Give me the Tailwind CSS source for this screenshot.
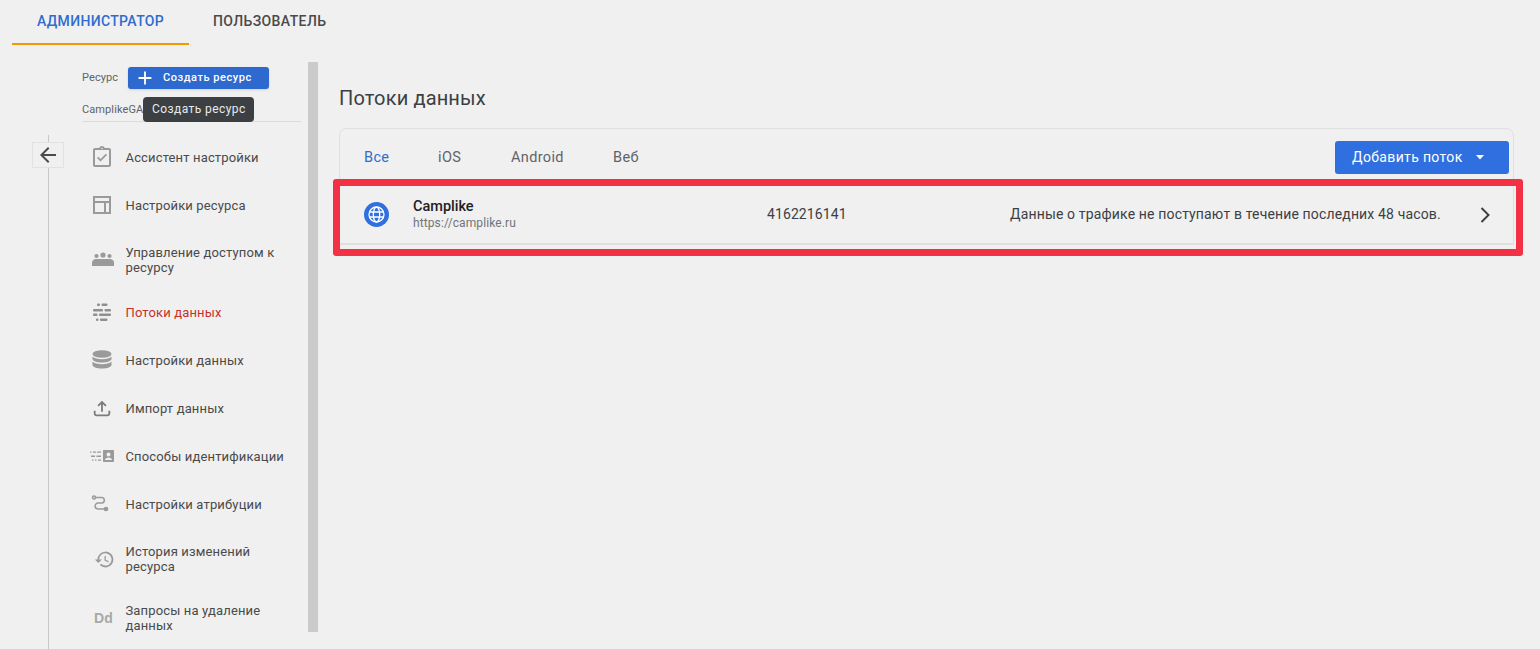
<!DOCTYPE html>
<html lang="ru">
<head>
  <meta charset="UTF-8" />
  <title>Потоки данных</title>
  <script src="https://cdn.jsdelivr.net/npm/@tailwindcss/browser@4"></script>
</head>
<body class="bg-[#f0f0f0] h-[649px] w-[1540px] overflow-hidden font-['Roboto',sans-serif] text-[#3c4043] relative">
  <!-- Top tabs -->
  <div class="flex h-[45px] pl-3">
    <div class="w-[177px] h-[45px] border-b-2 border-[#f29900] pl-[25px] pt-[12px] text-[14px] leading-[18px] tracking-[0.35px] font-medium text-[#2f6ccf]">АДМИНИСТРАТОР</div>
    <div class="pl-6 pt-[12px] text-[14px] leading-[18px] tracking-[0.4px] font-medium text-[#4a4a4a]">ПОЛЬЗОВАТЕЛЬ</div>
  </div>

  <div class="flex">
    <!-- Back column -->
    <div class="w-[82px] h-[604px] shrink-0 relative">
      <div class="absolute left-[48px] top-[90px] bottom-0 w-px bg-[#c8c8c8]"></div>
      <button class="absolute left-[32px] top-[97px] w-[32px] h-[26px] bg-[#f0f0f0] border border-[#e2e2e2] flex items-center justify-center">
        <svg width="24" height="24" viewBox="0 0 24 24" fill="#4a4a4a"><path d="M20 11H7.830l5.590-5.590L12 4l-8 8 8 8 1.410-1.410L7.830 13H20v-2z"/></svg>
      </button>
    </div>

    <!-- Sidebar -->
    <div class="w-[219px] shrink-0 relative">
      <div class="flex items-center pt-[22px] h-[44px] text-[11px] tracking-[0.1px] text-[#5f6368]">
        <span class="w-[46px]">Ресурс</span>
        <button class="w-[141px] h-[22px] rounded-[3px] bg-[#2d69cf] shadow-sm flex items-center text-white text-[11px] font-medium tracking-[0.55px]">
          <svg class="ml-[6px] mr-[7px]" width="22" height="22" viewBox="0 0 24 24" fill="#fff"><path d="M19 13h-6v6h-2v-6H5v-2h6V5h2v6h6v2z"/></svg>
          Создать ресурс
        </button>
      </div>
      <div class="h-[33px] pt-[14px] text-[11px] leading-[13px] tracking-[0.1px] text-[#5f6368] border-b border-[#dcdcdc]">CamplikeGA</div>
      <div class="absolute left-[61px] top-[52px] h-[25px] w-[111px] pl-[9px] rounded-[4px] bg-[#3c4043] text-[#e8eaed] text-[12px] leading-[25px] tracking-[0.42px] whitespace-nowrap">Создать ресурс</div>

      <nav class="text-[13px] leading-[15px] tracking-[0.15px] text-[#4a4a4a] pt-[11px]">
        <div class="flex items-center h-[48px]">
          <div class="w-[40px] mr-[3.500px] flex justify-center">
            <svg width="24" height="24" viewBox="0 0 24 24" fill="#9a9a9a"><path d="M19 3h-4.180C14.400 1.840 13.300 1 12 1s-2.400.84-2.820 2H5c-1.100 0-2 .9-2 2v15c0 1.100.9 2 2 2h14c1.100 0 2-.9 2-2V5c0-1.100-.9-2-2-2zm-7-.2c.41 0 .75.34.75.75s-.34.75-.75.75-.75-.34-.75-.75.34-.75.75-.75zM19 20H5V5h14v15zm-8.500-3.500l-3.500-3.500 1.200-1.200 2.300 2.300 5.300-5.300 1.200 1.200-6.500 6.500z"/></svg>
          </div>
          <span>Ассистент настройки</span>
        </div>
        <div class="flex items-center h-[48px]">
          <div class="w-[40px] mr-[3.500px] flex justify-center">
            <svg width="24" height="24" viewBox="0 0 24 24" fill="#9a9a9a"><path d="M3 3v18h18V3H3zm16 2v3H5V5h14zM5 19V10h9v9H5zm11 0v-9h3v9h-3z"/></svg>
          </div>
          <span>Настройки ресурса</span>
        </div>
        <div class="flex items-center h-[48px] mt-[7px]">
          <div class="w-[40px] mr-[3.500px] flex justify-center pl-[1px]">
            <svg width="24" height="24" viewBox="0 0 24 24" fill="#9a9a9a"><circle cx="12" cy="7" r="2.600"/><circle cx="5.500" cy="8" r="2.100"/><circle cx="18.500" cy="8" r="2.100"/><path d="M1 18v-3.500c0-2 2-3.500 4-3.500h14c2 0 4 1.500 4 3.500V18H1z"/></svg>
          </div>
          <span>Управление доступом к<br>ресурсу</span>
        </div>
        <div class="flex items-center h-[48px] mt-[4px] text-[#c5302c]">
          <div class="w-[40px] mr-[3.500px] flex justify-center">
            <svg width="24" height="24" viewBox="0 0 24 24" fill="#8f8f8f"><rect x="7" y="3.500" width="3" height="2.400" rx="1"/><rect x="11.500" y="3.500" width="6" height="2.400" rx="1"/><rect x="3" y="9" width="10" height="2.400" rx="1"/><rect x="14.500" y="9" width="6.500" height="2.400" rx="1"/><rect x="3" y="13.500" width="4.500" height="2.400" rx="1"/><rect x="9" y="13.500" width="12" height="2.400" rx="1"/><rect x="6" y="18.500" width="2.500" height="2.400" rx="1"/><rect x="10" y="18.500" width="7.500" height="2.400" rx="1"/></svg>
          </div>
          <span>Потоки данных</span>
        </div>
        <div class="flex items-center h-[48px]">
          <div class="w-[40px] mr-[3.500px] flex justify-center">
            <svg width="24" height="24" viewBox="0 0 24 24" fill="#9a9a9a"><ellipse cx="12" cy="6" rx="9.500" ry="3.800"/><path d="M2.500 8.500V11c0 1.900 4.200 3.500 9.500 3.500s9.500-1.600 9.500-3.500V8.500c-1.500 1.700-5.500 2.700-9.500 2.700S4 10.200 2.500 8.500z"/><path d="M2.500 13.500V17c0 1.900 4.200 3.500 9.500 3.500s9.500-1.600 9.500-3.500v-3.500c-1.500 1.700-5.500 2.700-9.500 2.700s-8-1-9.500-2.700z"/></svg>
          </div>
          <span>Настройки данных</span>
        </div>
        <div class="flex items-center h-[48px]">
          <div class="w-[40px] mr-[3.500px] flex justify-center">
            <svg width="22" height="22" viewBox="0 0 24 24" fill="#7c7c7c"><path d="M11 16V7.800L8.400 10.400 7 9l5-5 5 5-1.400 1.400L13 7.800V16h-2zM3 15h2v3c0 .6.4 1 1 1h12c.6 0 1-.4 1-1v-3h2v3c0 1.700-1.300 3-3 3H6c-1.700 0-3-1.300-3-3v-3z"/></svg>
          </div>
          <span>Импорт данных</span>
        </div>
        <div class="flex items-center h-[48px]">
          <div class="w-[40px] mr-[3.500px] flex justify-center">
            <svg width="24" height="24" viewBox="0 0 24 24" fill="#9a9a9a"><path d="M0 7.500h1.500v1.200H0zM3 7.500h3v1.200H3zM7 7.500h4v1.200H7zM1 11.500h4v1.500H1zM6.500 11.500h4.500v1.500H6.500zM2 15.500h1.500v1.200H2zM5 15.500h1.500v1.200H5zM8 15.500h3v1.200H8z"/><path d="M14 6h9c.6 0 1 .4 1 1v10c0 .6-.4 1-1 1h-9c-.6 0-1-.4-1-1V7c0-.6.4-1 1-1zm4.500 2.500a2 2 0 100 4 2 2 0 000-4zM15 16h7c0-1.500-2-2.400-3.500-2.400S15 14.500 15 16z" fill-rule="evenodd"/></svg>
          </div>
          <span>Способы идентификации</span>
        </div>
        <div class="flex items-center h-[48px]">
          <div class="w-[40px] mr-[3.500px] flex justify-center pr-[2px]">
            <svg width="20" height="20" viewBox="0 0 20 20" fill="none" stroke="#9a9a9a" stroke-width="1.500"><circle cx="3" cy="3.500" r="1.500"/><path d="M5 3.500h5.500a2.800 2.800 0 010 5.600H7a2.900 2.900 0 000 5.800h6"/><circle cx="15" cy="15" r="1.600" fill="#9a9a9a"/></svg>
          </div>
          <span>Настройки атрибуции</span>
        </div>
        <div class="flex items-center h-[62px]">
          <div class="w-[40px] mr-[3.500px] flex justify-center pl-[4px]">
            <svg width="21" height="21" viewBox="0 0 24 24" fill="#9a9a9a"><path d="M13 3a9 9 0 00-9 9H1l3.900 3.900L9 12H6a7 7 0 112.100 4.900l-1.400 1.400A9 9 0 1013 3zm-1 5v5l4.300 2.500.7-1.200-3.500-2.100V8H12z"/></svg>
          </div>
          <span>История изменений<br>ресурса</span>
        </div>
        <div class="flex items-center h-[56px]">
          <div class="w-[40px] mr-[3.500px] pl-[3px] text-center font-['Liberation_Sans',sans-serif] font-bold text-[14px] text-[#a8a8a8]">Dd</div>
          <span>Запросы на удаление<br>данных</span>
        </div>
      </nav>
    </div>

    <!-- Sidebar scrollbar -->
    <div class="ml-[7px] mt-[17px] w-[10px] h-[570px] shrink-0 bg-[#cbcbcb]"></div>

    <!-- Main -->
    <main class="ml-[21px] w-[1175px] shrink-0">
      <h1 class="mt-[41px] text-[20px] leading-[24px] tracking-[0.15px] text-[#3c4043]">Потоки данных</h1>
      <div class="mt-[18px] border border-[#dfdfdf] rounded-t-[8px]">
        <div class="h-[57px] flex items-center pl-[24px] pr-[4px] text-[14.500px] tracking-[0.35px] text-[#5f6368]">
          <span class="w-[74px] text-[#2f6ccf]">Все</span>
          <span class="w-[73px]">iOS</span>
          <span class="w-[102px]">Android</span>
          <span>Веб</span>
          <button class="ml-auto h-[33px] w-[174px] rounded-[3px] bg-[#2f6fe0] text-white text-[14px] tracking-[0.35px] flex items-center pl-[17px] mb-[1px]">
            Добавить поток
            <svg class="ml-[12px]" width="10" height="5" viewBox="0 0 10 5" fill="#fff"><path d="M1 0h8L5 4.500z"/></svg>
          </button>
        </div>
        <div class="h-[58px] flex items-center border-b border-[#dfdfdf] relative">
          <svg class="ml-[24px]" width="25" height="25" viewBox="0 0 25 25">
            <circle cx="12.500" cy="12.500" r="12.500" fill="#2f6fe0"/>
            <g fill="none" stroke="#fff" stroke-width="1.300"><circle cx="12.500" cy="12.500" r="7.500"/><ellipse cx="12.500" cy="12.500" rx="3.200" ry="7.500"/><path d="M5.500 10h14M5.500 15h14"/></g>
          </svg>
          <div class="ml-[24px] w-[354px] pt-[2px]">
            <div class="text-[14.500px] leading-[16px] font-medium text-[#202124]">Camplike</div>
            <div class="text-[12px] leading-[17px] tracking-[0.1px] text-[#70757a]">https://camplike.ru</div>
          </div>
          <span class="w-[243px] text-[14px] tracking-[0.1px]">4162216141</span>
          <span class="text-[14px] tracking-[0.15px] whitespace-nowrap">Данные о трафике не поступают в течение последних 48 часов.</span>
          <svg class="absolute left-[1133px] top-[17px]" width="24" height="24" viewBox="0 0 24 24" fill="#3c4043"><path d="M9.300 5.700L10.700 4.300 18.400 12l-7.700 7.700-1.400-1.400 6.300-6.300z" transform="translate(-1.500 0)"/></svg>
        </div>
      </div>
    </main>
  </div>

  <!-- Red annotation frame -->
  <div class="absolute left-[333px] top-[179px] w-[1190px] h-[77px] border-[7px] border-[#f33145] rounded-[3px] pointer-events-none"></div>
</body>
</html>
